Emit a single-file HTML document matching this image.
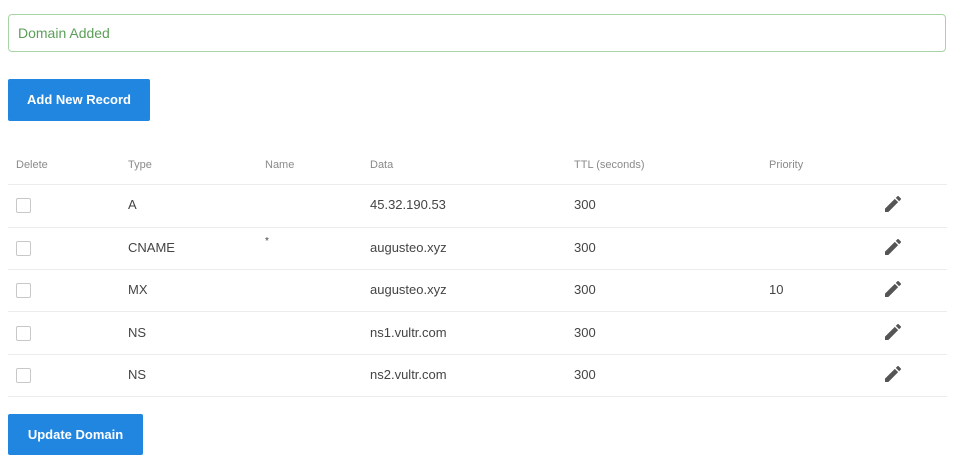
<!DOCTYPE html>
<html><head><style>
body{margin:0;width:960px;height:465px;background:#fff;font-family:"Liberation Sans",sans-serif;position:relative;overflow:hidden}
.a{position:absolute}
.alert{left:8px;top:14px;height:36px;border:1px solid #a6d5a3;border-radius:4px;color:#5b9f58;font-size:14px;line-height:37px;padding-left:9px;width:927px}
.btn{background:#2186e0;color:#fff;font-weight:bold;font-size:13px;border-radius:2px;text-align:center}
.h{top:159px;font-size:11px;color:#8a8a8a}
.line{left:8px;width:939px;height:1px;background:#ececec}
.t{font-size:13px;color:#444}
.cb{width:13px;height:13px;border:1px solid #c8c8c8;border-radius:2px;left:16px}
svg.a{left:885px}
</style></head><body>
<div class="a alert">Domain Added</div>
<div class="a btn" style="left:8px;top:79px;width:142px;height:42px;line-height:42px">Add New Record</div>
<div class="a h" style="left:16px">Delete</div>
<div class="a h" style="left:128px">Type</div>
<div class="a h" style="left:265px">Name</div>
<div class="a h" style="left:370px">Data</div>
<div class="a h" style="left:574px">TTL (seconds)</div>
<div class="a h" style="left:769px">Priority</div>
<div class="a line" style="top:184px"></div>
<div class="a line" style="top:227px"></div>
<div class="a line" style="top:269px"></div>
<div class="a line" style="top:311px"></div>
<div class="a line" style="top:354px"></div>
<div class="a line" style="top:396px"></div>

<div class="a cb" style="top:198px"></div>
<div class="a t" style="left:128px;top:197px">A</div>
<div class="a t" style="left:370px;top:197px">45.32.190.53</div>
<div class="a t" style="left:574px;top:197px">300</div>

<div class="a cb" style="top:241px"></div>
<div class="a t" style="left:128px;top:240px">CNAME</div>
<div class="a t" style="left:265px;top:236px;font-size:10px">*</div>
<div class="a t" style="left:370px;top:240px">augusteo.xyz</div>
<div class="a t" style="left:574px;top:240px">300</div>

<div class="a cb" style="top:283px"></div>
<div class="a t" style="left:128px;top:282px">MX</div>
<div class="a t" style="left:370px;top:282px">augusteo.xyz</div>
<div class="a t" style="left:574px;top:282px">300</div>
<div class="a t" style="left:769px;top:282px">10</div>

<div class="a cb" style="top:326px"></div>
<div class="a t" style="left:128px;top:325px">NS</div>
<div class="a t" style="left:370px;top:325px">ns1.vultr.com</div>
<div class="a t" style="left:574px;top:325px">300</div>

<div class="a cb" style="top:368px"></div>
<div class="a t" style="left:128px;top:367px">NS</div>
<div class="a t" style="left:370px;top:367px">ns2.vultr.com</div>
<div class="a t" style="left:574px;top:367px">300</div>

<svg class="a" style="top:196px" width="16" height="16" viewBox="3 3 18 18"><path fill="#555" d="M3 17.25V21h3.75L17.81 9.94l-3.75-3.75L3 17.25zM20.71 7.04a1 1 0 000-1.41l-2.34-2.34a1 1 0 00-1.41 0l-1.83 1.83 3.75 3.75 1.83-1.83z"/></svg>
<svg class="a" style="top:239px" width="16" height="16" viewBox="3 3 18 18"><path fill="#555" d="M3 17.25V21h3.75L17.81 9.94l-3.75-3.75L3 17.25zM20.71 7.04a1 1 0 000-1.41l-2.34-2.34a1 1 0 00-1.41 0l-1.83 1.83 3.75 3.75 1.83-1.83z"/></svg>
<svg class="a" style="top:281px" width="16" height="16" viewBox="3 3 18 18"><path fill="#555" d="M3 17.25V21h3.75L17.81 9.94l-3.75-3.75L3 17.25zM20.71 7.04a1 1 0 000-1.41l-2.34-2.34a1 1 0 00-1.41 0l-1.83 1.83 3.75 3.75 1.83-1.83z"/></svg>
<svg class="a" style="top:324px" width="16" height="16" viewBox="3 3 18 18"><path fill="#555" d="M3 17.25V21h3.75L17.81 9.94l-3.75-3.75L3 17.25zM20.71 7.04a1 1 0 000-1.41l-2.34-2.34a1 1 0 00-1.41 0l-1.83 1.83 3.75 3.75 1.83-1.83z"/></svg>
<svg class="a" style="top:366px" width="16" height="16" viewBox="3 3 18 18"><path fill="#555" d="M3 17.25V21h3.75L17.81 9.94l-3.75-3.75L3 17.25zM20.71 7.04a1 1 0 000-1.41l-2.34-2.34a1 1 0 00-1.41 0l-1.83 1.83 3.75 3.75 1.83-1.83z"/></svg>

<div class="a btn" style="left:8px;top:414px;width:135px;height:41px;line-height:41px">Update Domain</div>
</body></html>
